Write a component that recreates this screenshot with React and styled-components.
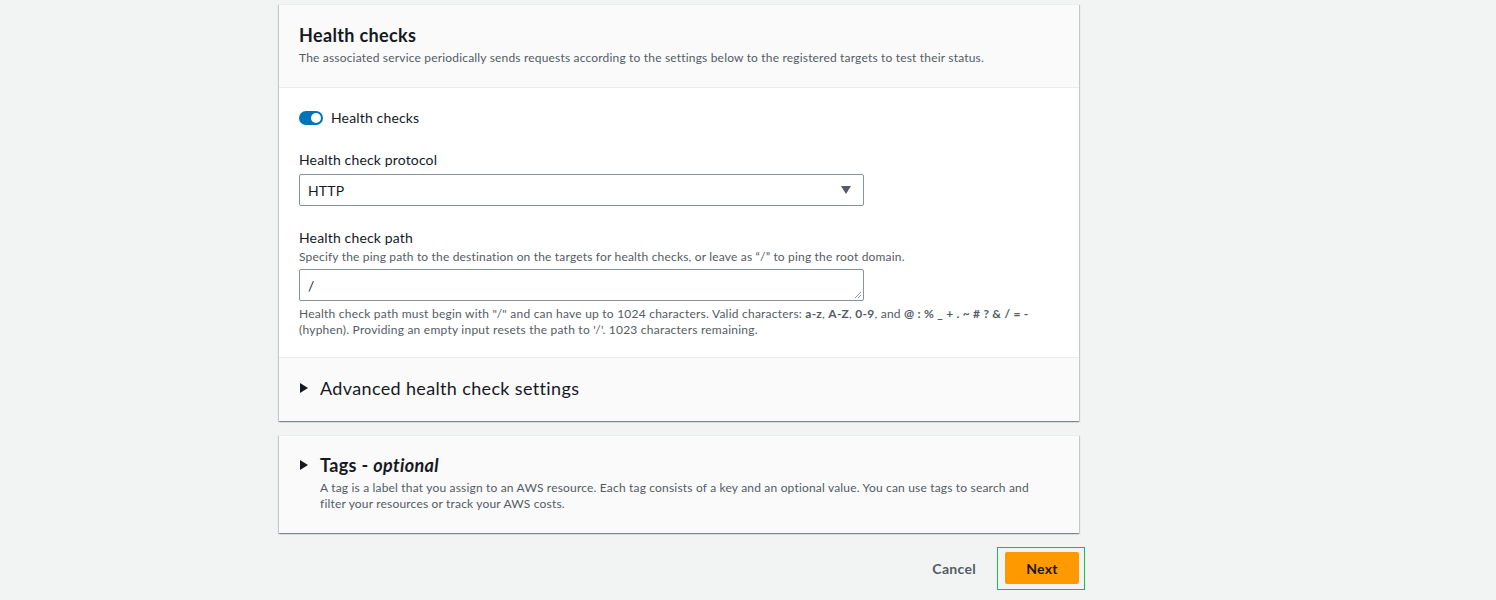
import React from "react";
import styled, { createGlobalStyle } from "styled-components";

const Global = createGlobalStyle`
  html, body { margin: 0; padding: 0; background: #f2f3f3; }
  body { font-family: Lato, "Open Sans", sans-serif; color: #16191f; letter-spacing: 0.15px; }
  * { box-sizing: border-box; }
`;

const Page = styled.div`
  width: 1496px;
  height: 600px;
  overflow: hidden;
  padding: 4px 0 0 279px;
`;

const Column = styled.div`
  width: 800px;
  display: flex;
  flex-direction: column;
  gap: 14px;
`;

const Card = styled.section`
  background: #ffffff;
  border-top: 1px solid #eaeded;
  box-shadow: 0 1px 1px 0 rgba(0, 28, 36, 0.3), 1px 1px 1px 0 rgba(0, 28, 36, 0.15),
    -1px 1px 1px 0 rgba(0, 28, 36, 0.15);
`;

const CardHeader = styled.header`
  background: #fafafa;
  border-bottom: 1px solid #eaeded;
  padding: 19px 20px 21px;
`;

const Title = styled.h2`
  margin: 0;
  font-size: 18px;
  line-height: 22px;
  font-weight: 700;
  letter-spacing: 0.35px;
  color: #16191f;
`;

const Desc = styled.p`
  margin: 4px 0 0;
  font-size: 12px;
  line-height: 16px;
  letter-spacing: 0.18px;
  color: #545b64;
`;

const Body = styled.div`
  padding: 20px 20px 19px;
  display: flex;
  flex-direction: column;
`;

const ToggleRow = styled.label`
  display: flex;
  align-items: center;
  gap: 8px;
  font-size: 14px;
  line-height: 20px;
  color: #16191f;
`;

const Switch = styled.span`
  width: 24px;
  height: 14px;
  border-radius: 7px;
  background: ${(p) => (p.$on ? "#0073bb" : "#aab7b8")};
  position: relative;
  display: inline-block;
  &::after {
    content: "";
    position: absolute;
    top: 2px;
    left: ${(p) => (p.$on ? "12px" : "2px")};
    width: 10px;
    height: 10px;
    border-radius: 50%;
    background: #fff;
  }
`;

const Field = styled.div`
  margin-top: ${(p) => p.$top || 20}px;
  display: flex;
  flex-direction: column;
`;

const Label = styled.div`
  font-size: 14px;
  line-height: 20px;
  color: #16191f;
`;

const FieldDesc = styled.div`
  margin-top: ${(p) => p.$top || 0}px;
  font-size: 12px;
  line-height: 16px;
  letter-spacing: 0.18px;
  color: #545b64;
`;

const Control = styled.div`
  margin-top: 4px;
  width: 565px;
  height: 32px;
  border: 1px solid #879596;
  border-radius: 2px;
  background: #fff;
  display: flex;
  align-items: center;
  justify-content: space-between;
  padding: 0 12px 0 8px;
  font-size: 14px;
  color: #16191f;
  position: relative;
`;

const Resize = styled.svg`
  position: absolute;
  right: 1px;
  bottom: 1px;
`;

const Constraint = styled.div`
  margin-top: 5px;
  font-size: 12px;
  line-height: 16px;
  letter-spacing: 0.23px;
  color: #545b64;
  b { font-weight: 700; color: #545b64; }
`;

const Expander = styled.div`
  background: #fafafa;
  border-top: 1px solid #eaeded;
  padding: 19px 20px 22px;
  display: flex;
  align-items: flex-start;
  gap: 12px;
`;

const Caret = styled.svg`
  flex: none;
  margin: 6px 0 0 1px;
`;

const ExpTitle = styled.div`
  font-size: 18px;
  line-height: 22px;
  letter-spacing: 0.35px;
  font-weight: ${(p) => (p.$bold ? 700 : 400)};
  color: #16191f;
  i { font-style: italic; }
`;

const TagsCard = styled(Card)`
  background: #fafafa;
`;

const TagsInner = styled.div`
  padding: 18px 20px 21px;
  display: flex;
  gap: 12px;
`;

const TagsText = styled.div`
  display: flex;
  flex-direction: column;
  gap: 4px;
`;

const Footer = styled.div`
  width: 800px;
  display: flex;
  justify-content: flex-end;
  align-items: center;
  gap: 29px;
  margin-top: 19px;
`;

const LinkButton = styled.button`
  border: none;
  background: none;
  font-family: inherit;
  letter-spacing: 0.3px;
  font-size: 14px;
  font-weight: 700;
  color: #545b64;
  padding: 0;
`;

const Primary = styled.button`
  position: relative;
  width: 74px;
  height: 32px;
  border: none;
  border-radius: 2px;
  background: #ff9900;
  color: #16191f;
  font-family: inherit;
  letter-spacing: 0.3px;
  font-size: 14px;
  font-weight: 700;
  &::after {
    content: "";
    position: absolute;
    top: -5px;
    left: -8px;
    right: -6px;
    bottom: -6px;
    border: 1px solid #1db94a;
  }
`;

const TriangleRight = () => (
  <Caret width="8" height="10" viewBox="0 0 8 10">
    <path d="M0 0 L8 5 L0 10 Z" fill="#16191f" />
  </Caret>
);

export default function App() {
  return (
    <>
      <Global />
      <Page>
        <Column>
          <Card>
            <CardHeader>
              <Title>Health checks</Title>
              <Desc>
                The associated service periodically sends requests according to the settings below to the registered targets to test their status.
              </Desc>
            </CardHeader>
            <Body>
              <ToggleRow>
                <Switch $on />
                Health checks
              </ToggleRow>
              <Field $top={22}>
                <Label>Health check protocol</Label>
                <Control>
                  HTTP
                  <svg width="10" height="8" viewBox="0 0 10 8">
                    <path d="M0 0 H10 L5 8 Z" fill="#545b64" />
                  </svg>
                </Control>
              </Field>
              <Field $top={22}>
                <Label>Health check path</Label>
                <FieldDesc $top={1}>
                  Specify the ping path to the destination on the targets for health checks, or leave as “/” to ping the root domain.
                </FieldDesc>
                <Control>
                  /
                  <Resize width="8" height="8" viewBox="0 0 8 8">
                    <path d="M7 1 L1 7 M7 4 L4 7" stroke="#879596" strokeWidth="1" />
                  </Resize>
                </Control>
                <Constraint>
                  Health check path must begin with "/" and can have up to 1024 characters. Valid characters: <b>a-z</b>, <b>A-Z</b>, <b>0-9</b>, and <b>@ : % _ + . ~ # ? &amp; / = -</b>
                  <br />
                  (hyphen). Providing an empty input resets the path to '/'. 1023 characters remaining.
                </Constraint>
              </Field>
            </Body>
            <Expander>
              <TriangleRight />
              <ExpTitle>Advanced health check settings</ExpTitle>
            </Expander>
          </Card>
          <TagsCard>
            <TagsInner>
              <TriangleRight />
              <TagsText>
                <ExpTitle $bold>
                  Tags - <i>optional</i>
                </ExpTitle>
                <FieldDesc>
                  A tag is a label that you assign to an AWS resource. Each tag consists of a key and an optional value. You can use tags to search and
                  <br />
                  filter your resources or track your AWS costs.
                </FieldDesc>
              </TagsText>
            </TagsInner>
          </TagsCard>
        </Column>
        <Footer>
          <LinkButton>Cancel</LinkButton>
          <Primary>Next</Primary>
        </Footer>
      </Page>
    </>
  );
}
